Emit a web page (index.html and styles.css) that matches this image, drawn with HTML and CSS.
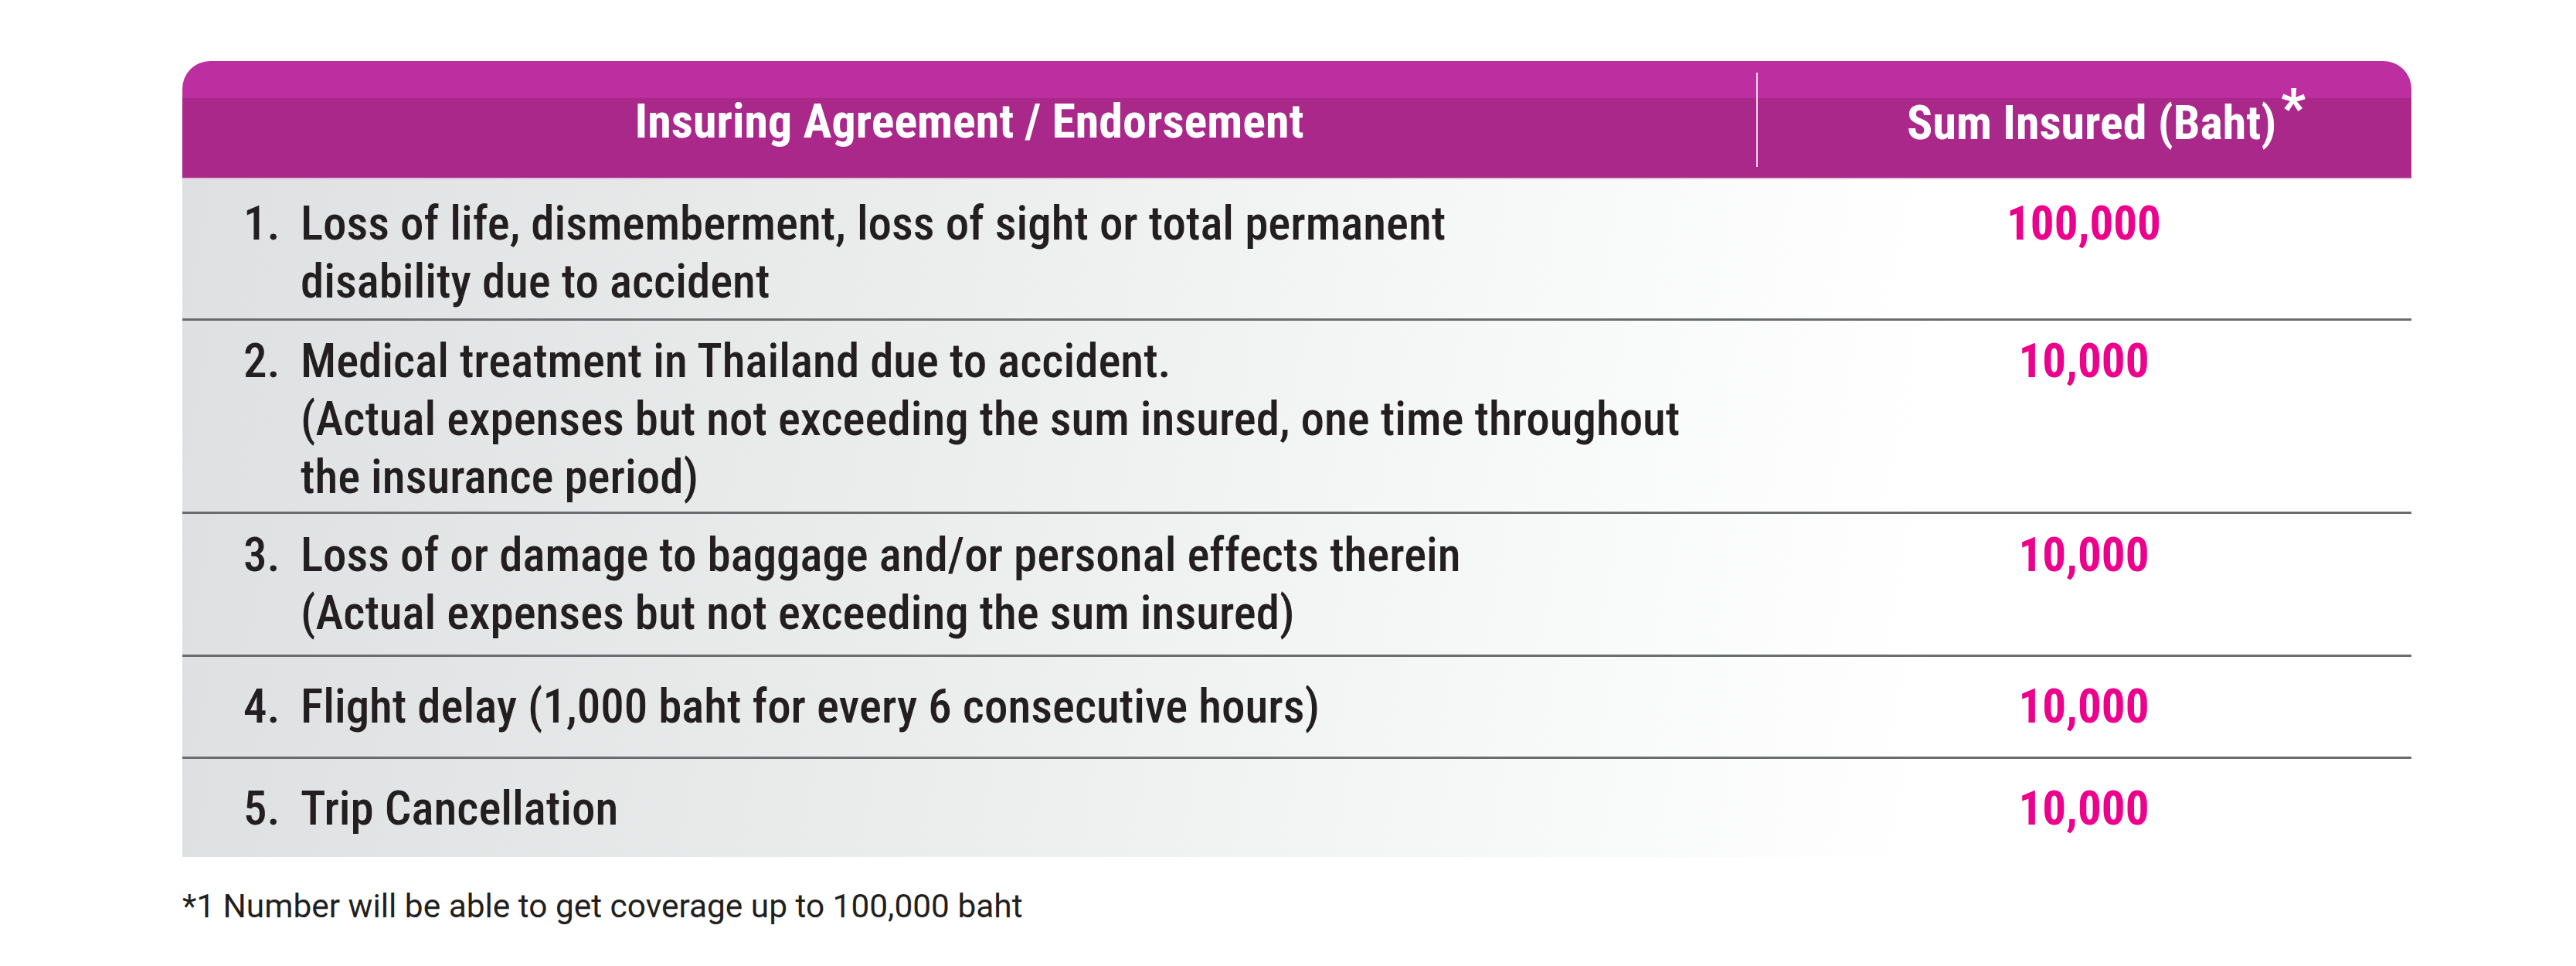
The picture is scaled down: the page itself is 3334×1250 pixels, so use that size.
FILE: index.html
```html
<!DOCTYPE html>
<html lang="en">
<head>
<meta charset="utf-8">
<title>Coverage</title>
<link rel="stylesheet" href="styles.css">
</head>
<body>
<main class="page">
  <section class="coverage">
    <div class="coverage__head">
      <div class="coverage__th coverage__th--item">Insuring Agreement / Endorsement</div>
      <div class="coverage__th coverage__th--sum">Sum Insured (Baht)<sup class="star">*</sup></div>
    </div>
    <div class="coverage__row coverage__row--first">
      <div class="coverage__item"><span class="coverage__no">1.</span><span class="coverage__text">Loss of life, dismemberment, loss of sight or total permanent<br>disability due to accident</span></div>
      <div class="coverage__sum">100,000</div>
    </div>
    <div class="coverage__row coverage__row--tall">
      <div class="coverage__item"><span class="coverage__no">2.</span><span class="coverage__text">Medical treatment in Thailand due to accident.<br>(Actual expenses but not exceeding the sum insured, one time throughout<br>the insurance period)</span></div>
      <div class="coverage__sum">10,000</div>
    </div>
    <div class="coverage__row coverage__row--third">
      <div class="coverage__item"><span class="coverage__no">3.</span><span class="coverage__text">Loss of or damage to baggage and/or personal effects therein<br>(Actual expenses but not exceeding the sum insured)</span></div>
      <div class="coverage__sum">10,000</div>
    </div>
    <div class="coverage__row coverage__row--single">
      <div class="coverage__item"><span class="coverage__no">4.</span><span class="coverage__text">Flight delay (1,000 baht for every 6 consecutive hours)</span></div>
      <div class="coverage__sum">10,000</div>
    </div>
    <div class="coverage__row coverage__row--single">
      <div class="coverage__item"><span class="coverage__no">5.</span><span class="coverage__text">Trip Cancellation</span></div>
      <div class="coverage__sum">10,000</div>
    </div>
  </section>
  <p class="footnote">*1 Number will be able to get coverage up to 100,000 baht</p>
</main>
</body>
</html>
```
FILE: styles.css
```css
html, body {
  margin: 0;
  padding: 0;
  background: #ffffff;
}

body {
  font-family: Roboto, "Liberation Sans", sans-serif;
  font-stretch: 75%;
  color: #231f20;
}

.page {
  padding: 79px 0 0 236px;
  width: 2885px;
}

.coverage {
  width: 2885px;
}

.coverage__head {
  display: grid;
  grid-template-columns: 2037px 1fr;
  align-items: center;
  height: 151px;
  border-radius: 36px 36px 0 0;
  background: linear-gradient(to bottom, #bd2fa1 0, #bd2fa1 48px, #a9288a 48px, #a9288a 100%);
  border-bottom: 2px solid #e6c3dd;
  color: #ffffff;
  font-weight: bold;
  font-size: 62px;
}

.coverage__th {
  display: flex;
  align-items: center;
  justify-content: center;
  line-height: 75px;
}

.coverage__th--item {
  padding-top: 4px;
}

.coverage__th--sum {
  height: 122px;
  border-left: 2px solid #f1d6ea;
  padding: 8px 0 0 56px;
  box-sizing: border-box;
  font-size: 62px;
}

.star {
  font-size: 68px;
  font-weight: 900;
  line-height: 0;
  align-self: flex-start;
  margin-top: 38px;
  margin-left: 6px;
}

.coverage__row {
  display: grid;
  grid-template-columns: 2037px 1fr;
  align-items: start;
  padding: 16px 0 12px;
  border-top: 3px solid #6b6c6e;
  font-size: 61px;
  line-height: 75px;
  background: linear-gradient(100deg, #dee0e1 0%, #eceeee 35%, #f7f8f8 60%, #ffffff 78%);
}

.coverage__head + .coverage__row {
  border-top: 0;
}

.coverage__row--first {
  padding: 20px 0 10px;
}

.coverage__row--tall {
  padding: 15px 0 7px;
}

.coverage__row--third {
  padding: 16px 0 16px;
}

.coverage__row--single {
  padding: 27px 0 27px;
}

.coverage__row:last-child {
  padding-bottom: 25px;
}

.coverage__item {
  display: flex;
  padding-left: 79px;
  font-weight: 500;
}

.coverage__no {
  flex: 0 0 74px;
}

.coverage__text {
  white-space: nowrap;
}

.coverage__sum {
  text-align: center;
  font-weight: bold;
  color: #ec008c;
}

.footnote {
  margin: 39px 0 0;
  font-family: Roboto, "Liberation Sans", sans-serif;
  font-stretch: 90%;
  font-weight: 400;
  font-size: 42.4px;
  line-height: 50px;
  color: #231f20;
}
```
